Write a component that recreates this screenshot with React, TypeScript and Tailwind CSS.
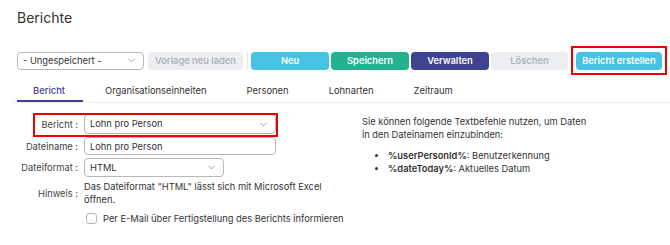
import React from 'react'
import { ChevronDown } from 'lucide-react'

const tabs = ['Bericht', 'Organisationseinheiten', 'Personen', 'Lohnarten', 'Zeitraum']

function Select({ value, width, height }: { value: string; width: string; height: string }) {
  return (
    <div
      className={`flex shrink-0 items-center justify-between rounded-[4px] border border-[#b8b8b8] bg-white pl-[5px] pr-[6px] ${width} ${height}`}
    >
      <span className="text-[9.3px] leading-[12px] text-[#333]">{value}</span>
      <ChevronDown className="h-[11px] w-[11px] text-[#777]" strokeWidth={1.5} />
    </div>
  )
}

const btn = 'block h-[18px] shrink-0 rounded-[4px] text-[9.3px] font-semibold leading-[18px]'

export default function App() {
  return (
    <div className="relative h-[245px] w-[670px] overflow-hidden bg-white font-['Inter',sans-serif] text-[#333]">
      <div className="px-[17px] pt-[9px]">
        <h1 className="text-[14px] leading-[18px] text-[#333]">Berichte</h1>

        {/* Werkzeugleiste */}
        <div className="-mr-[17px] mt-[19px] flex h-[29px] items-center">
          <Select value="- Ungespeichert -" width="w-[127px]" height="h-[18px]" />
          <button className={`${btn} ml-[4px] w-[95px] bg-[#eceef2] text-[#b1b4bb]`}>Vorlage neu laden</button>
          <div className="ml-[4px] h-[18px] w-px shrink-0 bg-[#e2e4e8]" />
          <button className={`${btn} ml-[3px] w-[78px] bg-[#45c3e2] text-white`}>Neu</button>
          <button className={`${btn} ml-[2px] w-[78px] bg-[#22b290] text-white`}>Speichern</button>
          <button className={`${btn} ml-[2px] w-[78px] bg-[#3f4291] text-white`}>Verwalten</button>
          <button className={`${btn} ml-[2px] w-[77px] bg-[#eceef2] text-[#b1b4bb]`}>Löschen</button>
          <div className="ml-[3px] shrink-0 border-2 border-[#ee0000] px-[3px] pb-[3px] pt-[4px]">
            <button className={`${btn} w-[86px] bg-[#45c3e2] text-white`}>Bericht erstellen</button>
          </div>
        </div>

        {/* Reiter */}
        <div className="-ml-[4px] -mr-[17px] mt-[5px] flex border-b border-[#ececec]">
          {tabs.map((t, i) => (
            <div
              key={t}
              className={`relative px-[20px] pb-[4px] pt-[4px] text-[9.4px] leading-[14px] ${
                i === 0 ? 'font-medium text-[#3f4291]' : 'text-[#333]'
              }`}
            >
              {t}
              {i === 0 && <span className="absolute bottom-0 left-[4px] right-[2px] h-[2px] bg-[#3f4291]" />}
            </div>
          ))}
        </div>

        <div className="mt-[11px] flex">
          {/* Formular */}
          <div className="w-[345px]">
            <div className="grid grid-cols-[61px_1fr] items-center gap-x-[6px] gap-y-[3px] text-[9.3px] leading-[13px]">
              <span className="text-right text-[#444]">Bericht :</span>
              <Select value="Lohn pro Person" width="w-[192px]" height="h-[20px]" />

              <span className="text-right text-[#444]">Dateiname :</span>
              <div className="flex h-[18px] w-[192px] items-center rounded-[4px] border border-[#b8b8b8] pl-[5px]">
                Lohn pro Person
              </div>

              <span className="text-right text-[#444]">Dateiformat :</span>
              <Select value="HTML" width="w-[140px]" height="h-[19px]" />

              <span className="text-right text-[#444]">Hinweis :</span>
              <p className="w-[245px]">
                Das Dateiformat &quot;HTML&quot; lässt sich mit Microsoft Excel öffnen.
              </p>
            </div>
            <label className="ml-[69px] mt-[6px] flex items-center gap-[6px] text-[9.3px] leading-[13px]">
              <span className="h-[11px] w-[11px] rounded-[3px] border border-[#b8b8b8] bg-white" />
              Per E-Mail über Fertigstellung des Berichts informieren
            </label>
          </div>

          {/* Hinweise Textbefehle */}
          <div className="pt-[1px] text-[9.3px] leading-[13px]">
            <p>
              Sie können folgende Textbefehle nutzen, um Daten
              <br />
              in den Dateinamen einzubinden:
            </p>
            <ul className="mt-[9px] list-disc pl-[26px] leading-[12.5px]">
              <li>
                <span className="font-semibold">%userPersonId%</span>: Benutzerkennung
              </li>
              <li>
                <span className="font-semibold">%dateToday%</span>: Aktuelles Datum
              </li>
            </ul>
          </div>
        </div>
      </div>

      {/* Markierung Bericht-Zeile */}
      <div className="pointer-events-none absolute left-[33px] top-[113px] h-[24px] w-[245px] border-2 border-[#ee0000]" />
    </div>
  )
}
